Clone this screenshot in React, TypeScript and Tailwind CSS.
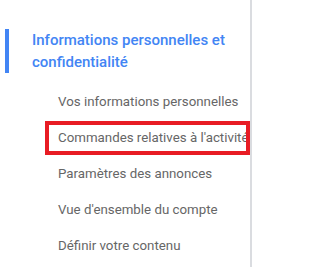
const ITEMS = [
  "Vos informations personnelles",
  "Commandes relatives à l'activité",
  "Paramètres des annonces",
  "Vue d'ensemble du compte",
  "Définir votre contenu",
];

export default function App() {
  return (
    <div
      className="w-[252px] h-[267px] overflow-hidden bg-white border-r-2 border-[#dadce0]"
      style={{ fontFamily: "Roboto, 'Liberation Sans', sans-serif" }}
    >
      <div className="mt-[29px] ml-[5px] border-l-4 border-[#4285f4] pl-[23px] pr-2">
        <h2 className="text-[15px] leading-[22px] font-medium text-[#4285f4]">
          Informations personnelles et confidentialité
        </h2>
      </div>

      <nav className="mt-[12px] ml-[45px] flex flex-col gap-[2px]">
        {ITEMS.map((label, i) => (
          <a
            key={label}
            href="#"
            className={
              i === 1
                ? "h-[34px] flex items-center pl-[13px] whitespace-nowrap text-[13.3px] text-[#666666] outline-4 -outline-offset-4 outline-[#e81c24]"
                : "h-[34px] flex items-center pl-[13px] whitespace-nowrap text-[13.3px] text-[#666666]"
            }
          >
            {label}
          </a>
        ))}
      </nav>
    </div>
  );
}
